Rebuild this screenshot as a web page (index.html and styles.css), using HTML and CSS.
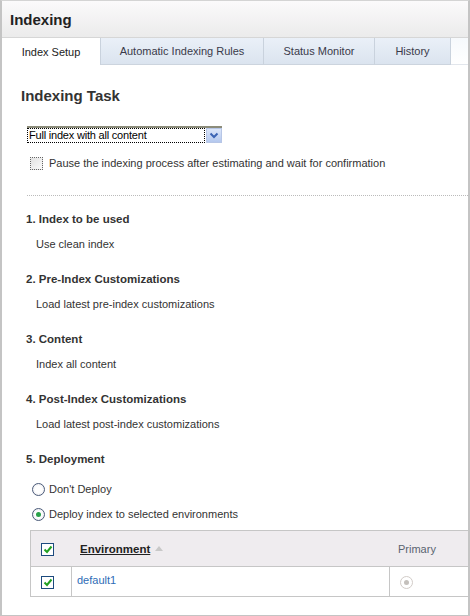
FILE: index.html
```html
<!DOCTYPE html>
<html>
<head>
<meta charset="utf-8">
<link rel="stylesheet" href="styles.css">
</head>
<body>
<div class="frame">
  <div class="header"><h1>Indexing</h1></div>
  <div class="tabs">
    <div class="tab active">Index Setup</div>
    <div class="tab t2">Automatic Indexing Rules</div>
    <div class="tab t3">Status Monitor</div>
    <div class="tab t4">History</div>
    <div class="tab-rest"></div>
  </div>
  <div class="content">
    <h2>Indexing Task</h2>
    <div class="select">
      <span class="select-text">Full index with all content</span>
      <span class="select-btn"><svg width="10" height="7" viewBox="0 0 10 7"><path d="M1.5 1.5 L5 5 L8.5 1.5" fill="none" stroke="#3c64b4" stroke-width="2"/></svg></span>
    </div>
    <div class="pause">
      <span class="cb-dotted"></span>
      <span>Pause the indexing process after estimating and wait for confirmation</span>
    </div>
    <div class="divider"></div>

    <div class="section">
      <h3>1. Index to be used</h3>
      <p>Use clean index</p>
    </div>
    <div class="section">
      <h3>2. Pre-Index Customizations</h3>
      <p>Load latest pre-index customizations</p>
    </div>
    <div class="section">
      <h3>3. Content</h3>
      <p>Index all content</p>
    </div>
    <div class="section">
      <h3>4. Post-Index Customizations</h3>
      <p>Load latest post-index customizations</p>
    </div>
    <div class="section deploy">
      <h3>5. Deployment</h3>
      <div class="radio-row"><span class="radio"></span><span>Don't Deploy</span></div>
      <div class="radio-row r2"><span class="radio on"></span><span>Deploy index to selected environments</span></div>
    </div>

    <div class="table">
      <div class="thead">
        <div class="c-check"><span class="cb"><svg width="10" height="9" viewBox="0 0 10 9"><path d="M1.5 4.5 L4 7 L8.5 1.5" fill="none" stroke="#22a022" stroke-width="2"/></svg></span></div>
        <div class="c-env"><span class="env-h">Environment</span><span class="sort"></span></div>
        <div class="c-prim">Primary</div>
      </div>
      <div class="trow">
        <div class="c-check"><span class="cb"><svg width="10" height="9" viewBox="0 0 10 9"><path d="M1.5 4.5 L4 7 L8.5 1.5" fill="none" stroke="#22a022" stroke-width="2"/></svg></span></div>
        <div class="c-env"><a class="link">default1</a></div>
        <div class="c-prim"><span class="radio dis"></span></div>
      </div>
    </div>
  </div>
</div>
</body>
</html>
```

FILE: styles.css
```css
* { box-sizing: border-box; }
body {
  margin: 0;
  background: #fff;
  font-family: "Liberation Sans", Arial, sans-serif;
  font-size: 11px;
  color: #333;
}
.frame {
  width: 470px;
  height: 616px;
  border-top: 1px solid #d4d4d4;
  border-left: 2px solid #c4c4c4;
  border-right: 2px solid #c4c4c4;
  border-bottom: 1px solid #c4c4c4;
  overflow: hidden;
  display: flex;
  flex-direction: column;
}
.header {
  height: 37px;
  background: linear-gradient(#fbfafb, #ebebeb);
  border-bottom: 1px solid #d6d6d6;
  padding: 0 0 0 8px;
  display: flex;
  align-items: center;
}
.header h1 {
  margin: 0;
  font-size: 15px;
  font-weight: bold;
  color: #222;
  padding-top: 1px;
}
.tabs {
  display: flex;
  height: 27px;
  background: #fff;
}
.tab {
  display: flex;
  align-items: center;
  justify-content: center;
  background: linear-gradient(#eaf0f8, #dbe4ef);
  border-right: 1px solid #c9d2dd;
  border-bottom: 1px solid #ccd4de;
  color: #3a3a4a;
  font-size: 11px;
}
.tab.active {
  width: 99px;
  background: #fff;
  border-bottom: none;
  border-right: 1px solid #c9d2dd;
  color: #222;
}
.t2 { width: 163px; }
.t3 { width: 111px; }
.t4 { width: 76px; }
.tab-rest {
  flex: 1;
  background: linear-gradient(#f6f9fc, #fff);
  border-bottom: 1px solid #e2e6ec;
}
.content {
  padding: 0 0 0 19px;
}
h2 {
  margin: 22px 0 0 0;
  font-size: 15px;
  font-weight: bold;
  color: #333;
  line-height: 18px;
}
.select {
  margin: 21px 0 0 6px;
  width: 195px;
  height: 17px;
  display: flex;
  border-top: 2px solid #8c8c7a;
  background: #fff;
}
.select-text {
  flex: 1;
  border: 1px dotted #000;
  font-size: 11px;
  line-height: 12px;
  color: #000;
  padding-left: 1px;
  letter-spacing: -0.2px;
}
.select-btn {
  width: 16px;
  margin-left: 1px;
  background: linear-gradient(#dce6fa, #b4c8ee);
  border: 1px solid #b7c6e6;
  display: flex;
  align-items: center;
  justify-content: center;
}
.pause {
  display: flex;
  align-items: center;
  margin: 13px 0 0 9px;
  height: 14px;
  gap: 6px;
  color: #333;
}
.cb-dotted {
  width: 13px;
  height: 13px;
  border: 1px dotted #666;
  background: linear-gradient(135deg, #e2e2e2, #fafafa);
}
.divider {
  margin: 25px 0 0 6px;
  border-top: 1px dotted #bbb;
}
.section h3 {
  margin: 0;
  font-size: 11.5px;
  font-weight: bold;
  color: #333;
  line-height: 14px;
  padding-left: 5px;
}
.section p {
  margin: 11px 0 0 15px;
  line-height: 14px;
}
.section { padding-top: 16px; }
.section + .section { padding-top: 21px; }
.deploy h3 { margin-bottom: 16px; }
.radio-row {
  display: flex;
  align-items: center;
  gap: 4px;
  margin-left: 11px;
  height: 14px;
}
.radio-row.r2 { margin-top: 11px; }
.radio {
  width: 13px;
  height: 13px;
  border-radius: 50%;
  border: 1px solid #4a5a78;
  background: radial-gradient(circle, #fff 40%, #e4e4ea);
  position: relative;
}
.radio.on::after {
  content: "";
  position: absolute;
  left: 3px; top: 3px;
  width: 5px; height: 5px;
  border-radius: 50%;
  background: #2aa14a;
}
.radio.dis {
  border-color: #d2ccc8;
  background: #fff;
}
.radio.dis::after {
  content: "";
  position: absolute;
  left: 3px; top: 3px;
  width: 5px; height: 5px;
  border-radius: 50%;
  background: #c4c0bc;
}
.table {
  margin: 9px 0 0 9px;
  border-left: 1px solid #c6c6c6;
  width: 500px;
}
.thead, .trow {
  display: flex;
}
.thead {
  height: 37px;
  background: #efecef;
  border-top: 1px solid #c6c6c6;
  border-bottom: 1px solid #c6c6c6;
}
.trow {
  height: 30px;
  border-bottom: 1px solid #c6c6c6;
  align-items: stretch;
}
.c-check {
  width: 41px;
  display: flex;
  justify-content: flex-start;
  padding-left: 10px;
  align-items: center;
}
.thead .c-check { padding-top: 1px; }
.trow .c-check { border-right: 1px solid #c6c6c6; padding-top: 2px; }
.c-env {
  width: 318px;
  display: flex;
  align-items: center;
  padding-left: 8px;
}
.trow .c-env {
  padding-left: 5px;
  padding-bottom: 3px;
  border-right: 1px solid #c6c6c6;
}
.c-prim {
  flex: 1;
  padding-left: 8px;
  display: flex;
  align-items: center;
  color: #5a6470;
  font-size: 11px;
}
.trow .c-prim { padding-left: 10px; padding-top: 2px; }
.cb {
  width: 13px;
  height: 13px;
  border: 1px solid #1c4a7e;
  background: #fff;
  display: flex;
  align-items: center;
  justify-content: center;
}
.env-h {
  font-weight: bold;
  font-size: 11.5px;
  color: #222;
  text-decoration: underline;
}
.sort {
  margin-left: 5px;
  width: 0; height: 0;
  border-left: 4px solid transparent;
  border-right: 4px solid transparent;
  border-bottom: 5px solid #c8c8c8;
}
.link {
  color: #2e6cb6;
  font-size: 11px;
}
```
